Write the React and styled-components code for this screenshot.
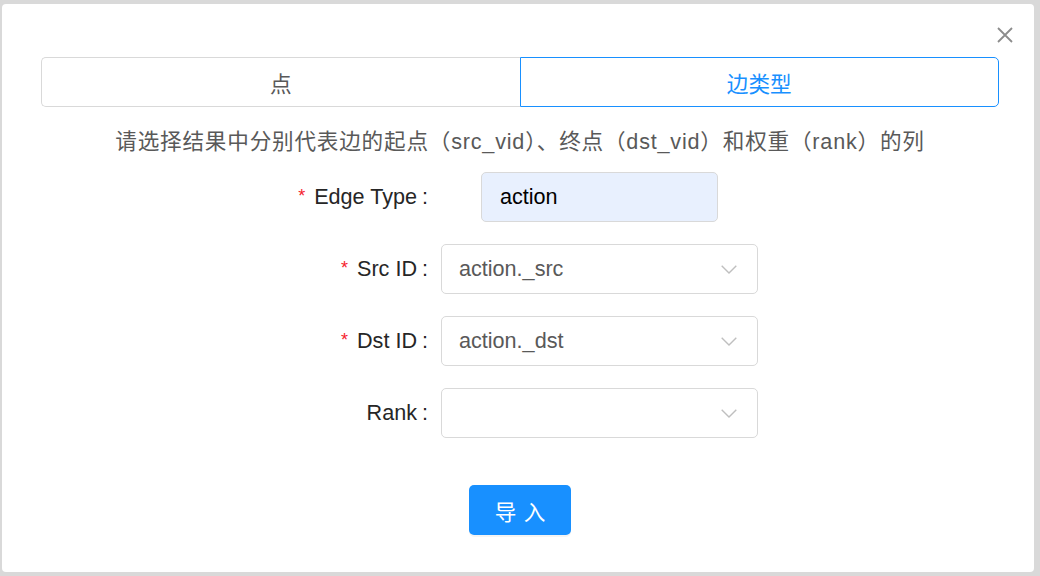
import styled, { createGlobalStyle } from 'styled-components'
import { useState } from 'react'

const GlobalStyle = createGlobalStyle`
  html, body {
    margin: 0;
    padding: 0;
    background: #d9d9d9;
  }
  body {
    font-family: "Liberation Sans", "Noto Sans CJK SC", sans-serif;
  }
`

const Frame = styled.div`
  box-sizing: border-box;
  width: 1040px;
  height: 576px;
  padding: 4px 6px 4px 2px;
`

const Modal = styled.div`
  position: relative;
  box-sizing: border-box;
  height: 100%;
  background: #fff;
  border-radius: 4px;
  padding: 53px 35px 0 39px;
  display: flex;
  flex-direction: column;
`

const CloseButton = styled.button`
  position: absolute;
  top: 23px;
  right: 21px;
  width: 16px;
  height: 16px;
  padding: 0;
  border: none;
  background: none;
  cursor: pointer;
  display: flex;

  svg {
    width: 16px;
    height: 16px;
  }
`

const Tabs = styled.div`
  display: flex;
  height: 50px;
`

const Tab = styled.div`
  flex: 1;
  box-sizing: border-box;
  display: flex;
  align-items: center;
  justify-content: center;
  font-size: 21.6px;
  cursor: pointer;
  color: ${p => (p.active ? '#1890ff' : '#595959')};
  border: 1px solid ${p => (p.active ? '#1890ff' : '#d9d9d9')};
  border-radius: ${p => (p.first ? '5px 0 0 5px' : '0 5px 5px 0')};
  ${p => (p.first ? 'border-right: none;' : '')}
`

const Hint = styled.p`
  margin: 20px 0 0;
  text-align: center;
  font-size: 21.6px;
  letter-spacing: 0.8px;
  line-height: 30px;
  color: #595959;
`

const Form = styled.div`
  margin-top: 15px;
  display: flex;
  flex-direction: column;
  gap: 22px;
`

const Row = styled.div`
  display: flex;
  align-items: center;
  height: 50px;
`

const Label = styled.label`
  width: 400px;
  text-align: right;
  font-size: 21.6px;
  color: #262626;
  white-space: nowrap;

  &::before {
    content: ${p => (p.required ? '"*"' : 'none')};
    color: #f5222d;
    font-size: 18px;
    margin-right: 9px;
    position: relative;
    top: -2px;
  }

  &::after {
    content: ':';
    margin: 0 13px 0 5px;
  }
`

const Control = styled.div`
  width: 317px;
  display: flex;
  justify-content: center;
`

const TextInput = styled.input`
  box-sizing: border-box;
  width: 237px;
  height: 50px;
  padding: 0 18px;
  border: 1px solid #d9d9d9;
  border-radius: 5px;
  background: #e8f0fe;
  font-family: inherit;
  font-size: 21.6px;
  color: #000;
  outline: none;
`

const Select = styled.div`
  box-sizing: border-box;
  width: 317px;
  height: 50px;
  padding: 0 20px 0 17px;
  border: 1px solid #d9d9d9;
  border-radius: 5px;
  display: flex;
  align-items: center;
  justify-content: space-between;
  font-size: 21.6px;
  color: #595959;
  cursor: pointer;

  svg {
    flex: none;
  }
`

const Footer = styled.div`
  margin-top: 47px;
  display: flex;
  justify-content: center;
`

const PrimaryButton = styled.button`
  width: 102px;
  height: 50px;
  border: none;
  border-radius: 5px;
  background: #1890ff;
  color: #fff;
  font-family: inherit;
  font-size: 21.6px;
  letter-spacing: 0.34em;
  text-indent: 0.34em;
  box-shadow: 0 2px 0 rgba(0, 0, 0, 0.045);
  cursor: pointer;
`

const Chevron = () => (
  <svg width="16" height="9" viewBox="0 0 16 9" fill="none">
    <path d="M0.7 0.7 L8 8 L15.3 0.7" stroke="#bfbfbf" strokeWidth="1.4" />
  </svg>
)

const SelectField = ({ value }) => (
  <Select>
    <span>{value}</span>
    <Chevron />
  </Select>
)

const App = () => {
  const [tab, setTab] = useState('edge')

  return (
    <>
      <GlobalStyle />
      <Frame>
        <Modal>
          <CloseButton aria-label='close'>
            <svg viewBox="0 0 16 16">
              <path d="M1 1 L15 15 M15 1 L1 15" stroke="#8c8c8c" strokeWidth="1.8" />
            </svg>
          </CloseButton>

          <Tabs>
            <Tab first active={tab === 'vertex'} onClick={() => setTab('vertex')}>点</Tab>
            <Tab active={tab === 'edge'} onClick={() => setTab('edge')}>边类型</Tab>
          </Tabs>

          <Hint>请选择结果中分别代表边的起点（src_vid）、终点（dst_vid）和权重（rank）的列</Hint>

          <Form>
            <Row>
              <Label required>Edge Type</Label>
              <Control>
                <TextInput defaultValue='action' />
              </Control>
            </Row>
            <Row>
              <Label required>Src ID</Label>
              <Control>
                <SelectField value='action._src' />
              </Control>
            </Row>
            <Row>
              <Label required>Dst ID</Label>
              <Control>
                <SelectField value='action._dst' />
              </Control>
            </Row>
            <Row>
              <Label>Rank</Label>
              <Control>
                <SelectField value='' />
              </Control>
            </Row>
          </Form>

          <Footer>
            <PrimaryButton>导入</PrimaryButton>
          </Footer>
        </Modal>
      </Frame>
    </>
  )
}

export default App
